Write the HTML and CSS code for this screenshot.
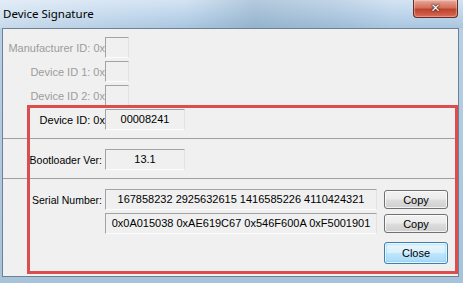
FILE: index.html
```html
<!DOCTYPE html>
<html lang="en">
<head>
    <meta charset="UTF-8">
    <title>Device Signature</title>
    <link rel="stylesheet" href="styles.css">
</head>
<body>
    <div class="window">
        <div class="titlebar">
            <span class="title">Device Signature</span>
            <div class="caption-close">&#x2715;</div>
        </div>

        <div class="client">
            <!-- IDs -->
            <div class="section ids">
                <div class="row disabled">
                    <span class="label">Manufacturer ID: 0x</span>
                    <div class="field tiny"></div>
                </div>
                <div class="row disabled">
                    <span class="label">Device ID 1: 0x</span>
                    <div class="field tiny"></div>
                </div>
                <div class="row disabled">
                    <span class="label">Device ID 2: 0x</span>
                    <div class="field tiny"></div>
                </div>
                <div class="row">
                    <span class="label">Device ID: 0x</span>
                    <div class="field mid">00008241</div>
                </div>
            </div>

            <!-- Bootloader -->
            <div class="section boot">
                <div class="row">
                    <span class="label spaced">Bootloader Ver:</span>
                    <div class="field mid">13.1</div>
                </div>
            </div>

            <!-- Serial -->
            <div class="section serial">
                <span class="label spaced">Serial Number:</span>
                <div class="field wide">167858232 2925632615 1416585226 4110424321</div>
                <button class="btn copy">Copy</button>

                <span></span>
                <div class="field wide">0x0A015038 0xAE619C67 0x546F600A 0xF5001901</div>
                <button class="btn copy">Copy</button>

                <span></span>
                <span></span>
                <button class="btn close default">Close</button>
            </div>
        </div>

        <div class="highlight"></div>
    </div>
</body>
</html>
```

FILE: styles.css
```css
body, html {
    margin: 0;
    padding: 0;
    background-color: #a9c4dc;
}

.window {
    position: relative;
    width: 463px;
    height: 283px;
    overflow: hidden;
    background: linear-gradient(180deg, #b9d1e7 0%, #a7c3dc 100%);
    font-family: "Liberation Sans", Arial, sans-serif;
    font-size: 11px;
    color: #000;
}

/* Aero title bar */
.titlebar {
    height: 28px;
    display: flex;
    justify-content: space-between;
    align-items: flex-start;
    background:
        linear-gradient(90deg, rgba(255, 255, 255, 0.35) 0%, rgba(255, 255, 255, 0) 40%,
            rgba(70, 110, 140, 0.22) 55%, rgba(70, 110, 140, 0.12) 72%, rgba(255, 255, 255, 0) 85%),
        linear-gradient(180deg, #d3e3f3 0%, #bcd4ea 55%, #a9c6df 100%);
}

.title {
    font-family: "Noto Sans", sans-serif;
    font-size: 11.5px;
    padding: 6px 0 0 3px;
    color: #000;
}

.caption-close {
    width: 43px;
    height: 17px;
    margin-right: 5px;
    border: 1px solid #6b2b22;
    border-top: none;
    border-radius: 0 0 4px 4px;
    background: linear-gradient(180deg, #e9a898 0%, #d2705c 45%, #c0432c 55%, #d46a54 100%);
    box-shadow: inset 0 0 1px 1px rgba(255, 255, 255, 0.35);
    color: #fff;
    font-family: "DejaVu Sans", sans-serif;
    font-weight: bold;
    font-size: 12px;
    line-height: 17px;
    text-align: center;
    text-shadow: 0 0 1px #3a1410, 0 0 1px #3a1410, 0 0 2px #3a1410;
}

/* Dialog body */
.client {
    margin-left: 2px;
    width: 455px;
    height: 247px;
    border: 1px solid #6f8191;
    background-color: #f0f0f0;
}

.section {
    padding: 8px 0;
}

.section + .section {
    border-top: 1px solid #a0a0a0;
    padding-top: 10px;
}

.ids {
    display: flex;
    flex-direction: column;
    gap: 3px;
}

.row {
    display: flex;
    align-items: center;
    height: 21px;
}

.label {
    width: 102px;
    text-align: right;
    white-space: nowrap;
}

.label.spaced {
    box-sizing: border-box;
    padding-right: 3px;
    font-size: 10.5px;
}

.disabled .label {
    color: #9c9c9c;
}

.field {
    box-sizing: border-box;
    height: 21px;
    line-height: 19px;
    border: 1px solid;
    border-color: #a3a3a3 #e2e2e2 #fcfcfc #a3a3a3;
    background-color: #f0f0f0;
    text-align: center;
    white-space: nowrap;
}

.field.tiny {
    width: 24px;
}

.field.mid {
    width: 80px;
}

.field.wide {
    width: 272px;
}

.serial {
    display: grid;
    grid-template-columns: 102px 272px 71px;
    grid-template-rows: 21px 21px 22px;
    row-gap: 3px;
    align-items: center;
}

.serial .btn {
    justify-self: end;
}

.serial .close {
    margin-top: 10px;
}

/* Win7 push buttons */
.btn {
    box-sizing: border-box;
    width: 64px;
    height: 19px;
    padding: 0;
    border: 1px solid #707070;
    border-radius: 3px;
    background: linear-gradient(180deg, #f2f2f2 0%, #ebebeb 48%, #dddddd 52%, #cfcfcf 100%);
    box-shadow: inset 0 0 0 1px rgba(255, 255, 255, 0.7);
    font-family: "Liberation Sans", Arial, sans-serif;
    font-size: 11px;
    color: #000;
}

.btn.default {
    height: 22px;
    border-color: #3c7fb1;
    background: linear-gradient(180deg, #eaf6fd 0%, #d9f0fc 48%, #bee6fd 52%, #a7d9f5 100%);
    box-shadow: inset 0 0 0 1px rgba(255, 255, 255, 0.8), inset 0 0 2px 1px #7ec4ea;
}

/* red annotation frame drawn over the dialog */
.highlight {
    position: absolute;
    left: 27px;
    top: 105px;
    width: 425px;
    height: 163px;
    border: 3px solid #dc4e4e;
    pointer-events: none;
}
```
